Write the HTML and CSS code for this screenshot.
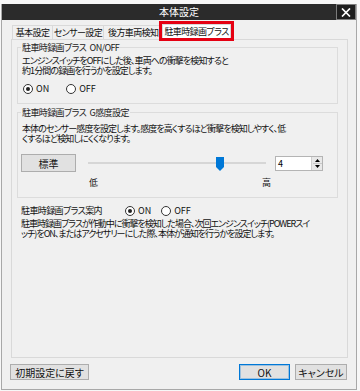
FILE: index.html
```html
<!DOCTYPE html>
<html lang="ja">
<head>
<meta charset="utf-8">
<title>本体設定</title>
<link rel="stylesheet" href="styles.css">
</head>
<body>
<div class="window">
  <div class="titlebar">
    <div class="title">本体設定</div>
    <div class="close">
      <svg width="10" height="9" viewBox="0 0 10 9"><path d="M1 0.5 L9 8.5 M9 0.5 L1 8.5" stroke="#fff" stroke-width="1.7" fill="none"/></svg>
    </div>
  </div>
  <div class="client">
    <div class="tabs">
      <div class="tab t1">基本設定</div>
      <div class="tab t2">センサー設定</div>
      <div class="tab t3">後方車両検知</div>
      <div class="tab active">駐車時録画プラス</div>
    </div>
    <div class="panel">
      <fieldset class="group g1">
        <legend>駐車時録画プラス ON/OFF</legend>
        <p class="desc">エンジンスイッチをOFFにした後、車両への衝撃を検知すると<br>約1分間の録画を行うかを設定します。</p>
        <div class="radios">
          <span class="radio"><i class="dot on"></i>ON</span>
          <span class="radio"><i class="dot"></i>OFF</span>
        </div>
      </fieldset>
      <fieldset class="group g2">
        <legend>駐車時録画プラス G感度設定</legend>
        <p class="desc">本体のセンサー感度を設定します。感度を高くするほど衝撃を検知しやすく、低<br>くするほど検知しにくくなります。</p>
        <div class="controls">
          <div class="btn std">標準</div>
          <div class="slider">
            <div class="track"></div>
            <svg class="thumb" style="left: 72%" width="8" height="14" viewBox="0 0 8 14"><polygon points="0,0 8,0 8,10 4,14 0,10" fill="#0078d7"/></svg>
          </div>
          <div class="spin">
            <span class="spin-val">4</span>
            <span class="spin-btns">
              <svg width="9" height="13" viewBox="0 0 9 13"><polygon points="4.5,2 7,5 2,5" fill="#000"/><polygon points="2,8 7,8 4.5,11" fill="#000"/><line x1="0" y1="6.5" x2="9" y2="6.5" stroke="#c8c8c8" stroke-width="1"/></svg>
            </span>
          </div>
        </div>
        <div class="scale"><span>低</span><span>高</span></div>
      </fieldset>
      <div class="guide">
        <div class="guide-row">
          <span class="guide-label">駐車時録画プラス案内</span>
          <span class="radio"><i class="dot on"></i>ON</span>
          <span class="radio"><i class="dot"></i>OFF</span>
        </div>
        <p class="desc guide-desc">駐車時録画プラスが作動中に衝撃を検知した場合、次回エンジンスイッチ(POWERスイ<br>ッチ)をON、またはアクセサリーにした際、本体が通知を行うかを設定します。</p>
      </div>
    </div>
    <div class="footer">
      <div class="btn reset">初期設定に戻す</div>
      <div class="btn ok">OK</div>
      <div class="btn cancel">キャンセル</div>
    </div>
  </div>
</div>
</body>
</html>
```
FILE: styles.css
```css
* { box-sizing: border-box; }
html, body { margin: 0; padding: 0; }
body {
  width: 360px;
  height: 391px;
  overflow: hidden;
  background: #f7f7f7;
  font-family: "Noto Sans CJK JP", "Noto Sans", sans-serif;
  font-feature-settings: "palt" 1;
  color: #000;
}
.window {
  margin: 4px 0 0 1px;
  width: 356px;
  height: 386px;
  border: 1px solid #a8a8a8;
  border-top: none;
  background: #f0f0f0;
  display: flex;
  flex-direction: column;
}
.titlebar {
  height: 16px;
  background: #2b2b2b;
  display: grid;
  grid-template-columns: 20px 1fr 20px;
  align-items: center;
}
.title {
  grid-column: 2;
  text-align: center;
  color: #fff;
  font-size: 10px;
  line-height: 16px;
}
.close {
  grid-column: 3;
  height: 16px;
  border: 1px solid #7c7c7c;
  background: #1e1e1e;
  display: flex;
  align-items: center;
  justify-content: center;
}
.client {
  flex: 1;
  display: flex;
  flex-direction: column;
}
.tabs {
  height: 19px;
  padding-left: 10px;
  display: flex;
  align-items: flex-end;
}
.tab {
  height: 14px;
  border: 1px solid #d9d9d9;
  border-bottom: none;
  background: #f0f0f0;
  font-size: 9px;
  line-height: 13px;
  letter-spacing: -0.6px;
  white-space: nowrap;
  overflow: hidden;
  margin-left: -1px;
  color: #111;
}
.t1 { margin-left: 0; width: 41px; text-align: center; }
.t2 { width: 52px; text-align: center; }
.t3 { width: 58px; padding-left: 4px; }
.tab.active {
  position: relative;
  z-index: 1;
  margin-left: 1px;
  margin-bottom: 1px;
  width: 69px;
  background: #fff;
  text-align: center;
  outline: 3px solid #e50012;
}
.panel {
  height: 319px;
  margin: 0 8px 0 9px;
  border: 1px solid #d9d9d9;
  padding: 2px 9px 0 5px;
}
.group {
  margin: 0;
  padding: 0 4px 8px 4px;
  border: 1px solid #dcdcdc;
  min-inline-size: 0;
}
.group legend {
  padding: 0 1px;
  margin-left: -1px;
  font-size: 9px;
  line-height: 11px;
  letter-spacing: -0.6px;
  word-spacing: 2px;
  color: #222;
}
.desc {
  margin: 3px 0 0 0;
  font-size: 9px;
  line-height: 10px;
  letter-spacing: -0.9px;
  white-space: nowrap;
  color: #111;
}
.radios {
  margin-top: 7px;
  height: 12px;
  display: flex;
  align-items: center;
}
.radio {
  display: inline-flex;
  align-items: center;
  font-size: 9px;
  line-height: 12px;
  color: #111;
}
.radios .radio:first-child { margin-left: 1px; }
.radios .radio + .radio { margin-left: 17px; }
.dot {
  width: 10px;
  height: 10px;
  border: 1px solid #333;
  border-radius: 50%;
  background: #fff;
  margin-right: 3px;
  display: inline-flex;
  align-items: center;
  justify-content: center;
}
.dot.on::after {
  content: "";
  width: 4px;
  height: 4px;
  border-radius: 50%;
  background: #222;
}
.g2 { margin-top: 3px; padding-bottom: 9px; }
.g2 .desc { margin-top: 6px; }
.controls {
  margin-top: 10px;
  height: 18px;
  display: flex;
  align-items: center;
}
.btn {
  background: #e1e1e1;
  border: 1px solid #adadad;
  font-size: 10px;
  color: #111;
  display: flex;
  align-items: center;
  justify-content: center;
  white-space: nowrap;
}
.std {
  margin-left: -1px;
  width: 55px;
  height: 18px;
}
.slider {
  position: relative;
  margin-left: 12px;
  width: 178px;
  height: 18px;
  display: flex;
  align-items: center;
}
.track {
  width: 100%;
  height: 2px;
  background: #d6d6d6;
}
.thumb {
  position: absolute;
  top: 3px;
  display: block;
}
.spin {
  margin-left: 9px;
  width: 48px;
  height: 15px;
  border: 1px solid #b4b4b4;
  background: #fff;
  display: flex;
}
.spin-val {
  flex: 1;
  font-size: 9px;
  line-height: 13px;
  padding-left: 2px;
}
.spin-btns {
  width: 11px;
  background: #e8e8e8;
  border-left: 1px solid #cfcfcf;
  display: flex;
  align-items: center;
  justify-content: center;
}
.spin-btns svg { display: block; }
.scale {
  margin: 5px 0 0 67px;
  width: 182px;
  display: flex;
  justify-content: space-between;
  font-size: 9px;
  line-height: 11px;
  color: #111;
}
.guide {
  margin-top: 7px;
  padding-left: 4px;
}
.guide-row {
  height: 12px;
  display: flex;
  align-items: center;
}
.guide-label {
  width: 104px;
  font-size: 9px;
  line-height: 12px;
  letter-spacing: -0.6px;
  white-space: nowrap;
  color: #111;
}
.guide-row .radio + .radio { margin-left: 10px; }
.guide-desc { margin-top: 2px; letter-spacing: -1px; }
.footer {
  flex: 1;
  padding: 6px 9px 0 8px;
  display: flex;
  align-items: flex-start;
}
.reset { width: 79px; height: 16px; }
.ok {
  margin-left: auto;
  width: 51px;
  height: 16px;
  border-color: #0078d7;
  box-shadow: inset 0 0 0 1px rgba(0, 120, 215, 0.3);
}
.cancel { margin-left: 5px; width: 52px; height: 16px; }
```
